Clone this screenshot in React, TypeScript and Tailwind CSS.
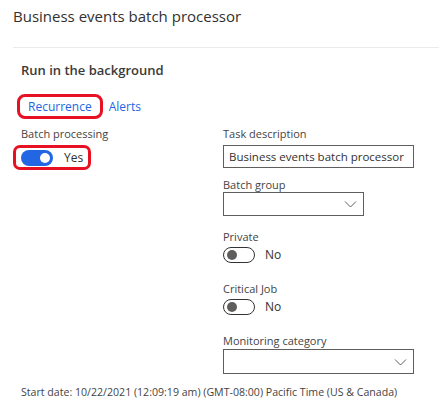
function Toggle({ on }: { on: boolean }) {
  if (on) {
    return (
      <span className="flex h-[16px] w-[32px] items-center justify-end rounded-full bg-[#2266e3] px-[3px]">
        <span className="h-[10px] w-[10px] rounded-full bg-white" />
      </span>
    )
  }
  return (
    <span className="flex h-[16px] w-[32px] items-center rounded-full border border-[#333] px-[3px]">
      <span className="h-[10px] w-[10px] rounded-full bg-[#605e5c]" />
    </span>
  )
}

function Chevron() {
  return (
    <svg className="h-[8px] w-[13px] text-[#605e5c]" viewBox="0 0 13 8" fill="none">
      <path d="M1 1.5l5.5 5.5L12 1.5" stroke="currentColor" strokeWidth="1" />
    </svg>
  )
}

export default function App() {
  return (
    <div
      className="h-[410px] w-[439px] overflow-hidden bg-white text-[#323130]"
      style={{ fontFamily: '"Open Sans", "Noto Sans", sans-serif' }}
    >
      <div className="flex h-[47px] items-start pl-[13px] pt-[5px]">
        <h1 className="text-[15px] leading-[22px] text-[#323130]">Business events batch processor</h1>
      </div>
      <div className="ml-[13px] border-t border-[#edebe9]" />

      <div className="px-[21px]">
        <h2 className="mt-[12px] text-[13px] font-semibold leading-[20px] text-[#3b3a39]">Run in the background</h2>

        <div className="mt-[14px] flex items-center gap-[6px]">
          <span className="-ml-[4px] rounded-[8px] border-[3px] border-[#e81123] px-[8px] py-[1px] text-[12px] leading-[17px] text-[#2266e3]">
            Recurrence
          </span>
          <span className="text-[12px] leading-[17px] text-[#2266e3]">Alerts</span>
        </div>

        <div className="mt-[7px] grid grid-cols-[202px_1fr]">
          <div>
            <div className="text-[11px] leading-[15px] text-[#444]">Batch processing</div>
            <div className="-ml-[8px] mt-[4px] flex h-[25px] w-[78px] items-center gap-[11px] rounded-[7px] border-[3px] border-[#e81123] pl-[5px]">
              <Toggle on />
              <span className="text-[12px]">Yes</span>
            </div>
          </div>

          <div className="flex flex-col">
            <div className="text-[11px] leading-[15px] text-[#444]">Task description</div>
            <div className="mt-[4px] flex h-[23px] w-[191px] items-center border border-[#605e5c] px-[5px] text-[11.5px] whitespace-nowrap">
              Business events batch processor
            </div>

            <div className="mt-[9px] text-[11px] leading-[15px] text-[#444]">Batch group</div>
            <div className="mt-[0px] flex h-[24px] w-[141px] items-center justify-end border border-[#605e5c] pr-[6px]">
              <Chevron />
            </div>

            <div className="mt-[13px] text-[11px] leading-[15px] text-[#444]">Private</div>
            <div className="mt-[2px] flex items-center gap-[10px]">
              <Toggle on={false} />
              <span className="text-[12px]">No</span>
            </div>

            <div className="mt-[17px] text-[11px] leading-[15px] text-[#444]">Critical Job</div>
            <div className="mt-[2px] flex items-center gap-[10px]">
              <Toggle on={false} />
              <span className="text-[12px]">No</span>
            </div>

            <div className="mt-[17px] text-[11px] leading-[15px] text-[#444]">Monitoring category</div>
            <div className="mt-[1px] flex h-[25px] w-[191px] items-center justify-end border border-[#605e5c] pr-[6px]">
              <Chevron />
            </div>
          </div>
        </div>

        <div className="mt-[11px] whitespace-nowrap text-[10.6px] leading-[15px] text-[#444]">
          Start date: 10/22/2021 (12:09:19 am) (GMT-08:00) Pacific Time (US &amp; Canada)
        </div>
      </div>
    </div>
  )
}
